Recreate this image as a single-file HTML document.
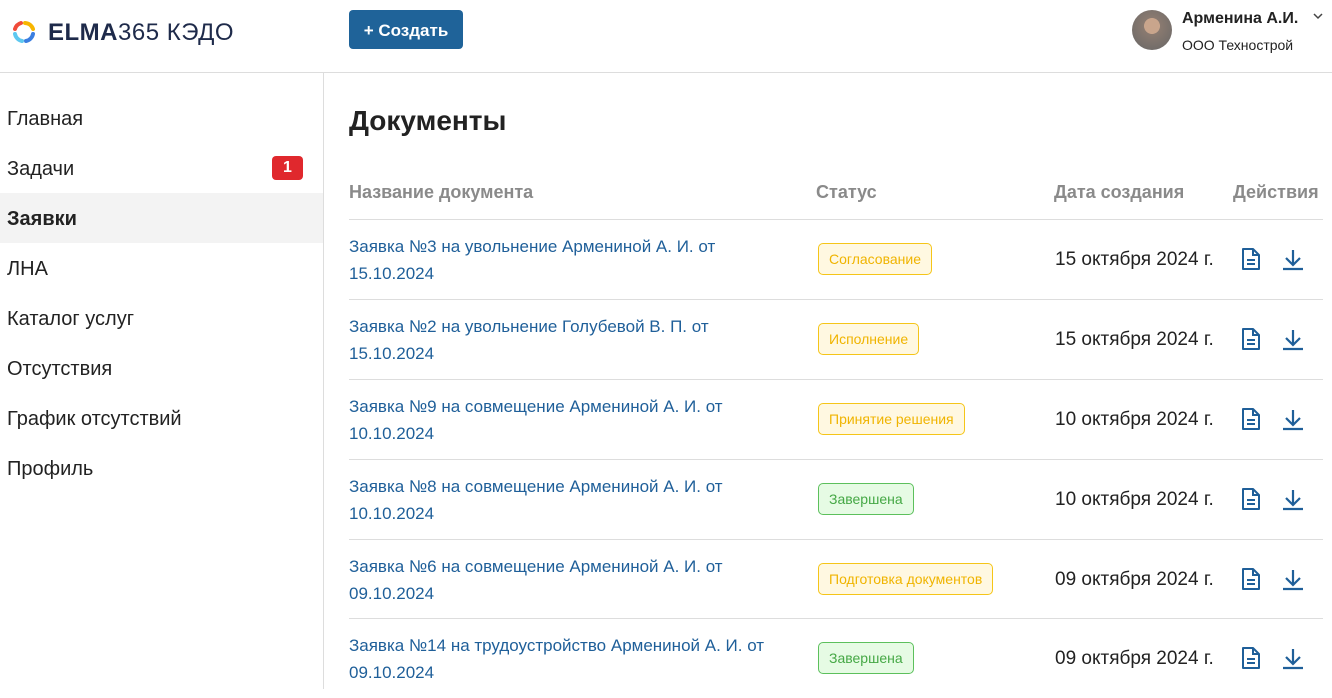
<!DOCTYPE html>
<html><head><meta charset="utf-8"><style>
*{box-sizing:border-box;margin:0;padding:0}
body{width:1332px;height:689px;overflow:hidden;background:#fff;font-family:"Liberation Sans","DejaVu Sans",sans-serif;color:#222;position:relative}
.hdr{position:absolute;left:0;top:0;width:1332px;height:73px;border-bottom:1px solid #ddd}
.side{position:absolute;left:0;top:73px;width:324px;height:616px;border-right:1px solid #ddd}
.side div{position:absolute;left:0;width:323px;height:50px;line-height:52px;padding-left:7px;font-size:20px;color:#222}
.side .act{background:#f3f3f3;font-weight:bold}
.red{position:absolute;left:272px;top:13px;width:31px;height:24px;background:#e0282d;color:#fff;border-radius:4px;font-size:16px;line-height:24px;text-align:center;font-weight:bold}
.btn{position:absolute;left:349px;top:10px;width:114px;height:39px;background:#1f6399;border-radius:4px;color:#fff;font-size:17px;font-weight:bold;line-height:41px;text-align:center}
h1{position:absolute;left:349px;top:105px;font-size:28px;font-weight:bold;color:#222}
.th{position:absolute;top:182px;font-size:18px;font-weight:bold;color:#8a8a8a}
.row{position:absolute;left:349px;width:974px;height:80px;border-top:1px solid #ddd}
.nm{position:absolute;left:0;top:13px;width:440px;font-size:17px;line-height:27px;color:#1f5f99}
.bd{position:absolute;left:469px;top:23px;height:32px;line-height:31px;padding:0 10px;font-size:14px;border-radius:5px}
.y{background:#fff8e1;border:1px solid #f5c518;color:#f0b400}
.g{background:#e6fbe4;border:1px solid #5cc05c;color:#45a845}
.dt{position:absolute;left:706px;top:29px;font-size:19px;color:#222}
.ic{position:absolute;top:27px}
</style></head><body>
<div class="hdr">
<svg style="position:absolute;left:12px;top:20px" width="24" height="24" viewBox="0 0 24 24"><path d="M3 9 A9 9 0 0 1 9 3" stroke="#f04b3a" stroke-width="4" fill="none" stroke-linecap="round"/><path d="M13 3 A9 9 0 0 1 21 9" stroke="#f7b500" stroke-width="4" fill="none" stroke-linecap="round"/><path d="M21 14 A9 9 0 0 1 14 21" stroke="#3b7ee0" stroke-width="4" fill="none" stroke-linecap="round"/><path d="M10 21 A9 9 0 0 1 3 14" stroke="#5ec8f0" stroke-width="4" fill="none" stroke-linecap="round"/></svg>
<div style="position:absolute;left:48px;top:19px;font-size:24px;color:#1e2a4a;letter-spacing:0.5px"><b>ELMA</b>365 КЭДО</div>
<div class="btn">+ Создать</div>
<div style="position:absolute;left:1132px;top:10px;width:40px;height:40px;border-radius:50%;background:radial-gradient(circle at 50% 40%,#c9a58c 0 25%,#8a7a70 26%,#666 100%)"></div>
<div style="position:absolute;left:1182px;top:10px;font-size:16px;font-weight:bold;color:#222">Арменина А.И.</div>
<svg style="position:absolute;left:1312px;top:12px" width="12" height="8" viewBox="0 0 12 8"><path d="M2 2l4 4 4-4" stroke="#444" stroke-width="1.5" fill="none"/></svg>
<div style="position:absolute;left:1182px;top:37px;font-size:14px;color:#222">ООО Технострой</div>
</div>
<div class="side">
<div style="top:20px">Главная</div>
<div style="top:70px">Задачи<span class="red">1</span></div>
<div class="act" style="top:120px">Заявки</div>
<div style="top:170px">ЛНА</div>
<div style="top:220px">Каталог услуг</div>
<div style="top:270px">Отсутствия</div>
<div style="top:320px">График отсутствий</div>
<div style="top:370px">Профиль</div>
</div>
<h1>Документы</h1>
<div class="th" style="left:349px">Название документа</div>
<div class="th" style="left:816px">Статус</div>
<div class="th" style="left:1054px">Дата создания</div>
<div class="th" style="left:1233px">Действия</div>

<div class="row" style="top:219px"><div class="nm">Заявка №3 на увольнение Армениной А. И. от 15.10.2024</div><div class="bd y">Согласование</div><div class="dt">15 октября 2024 г.</div>
<svg class="ic" style="left:891px" width="22" height="24" viewBox="0 0 22 24"><path d="M3 2h10l6 6v14H3z" fill="none" stroke="#1f5f99" stroke-width="2" stroke-linejoin="round"/><path d="M13 2v6h6M7 13h8M7 17h8" stroke="#1f5f99" stroke-width="2" fill="none"/></svg>
<svg class="ic" style="left:933px" width="22" height="24" viewBox="0 0 22 24"><path d="M11 3v14M4 11l7 7 7-7M1 22h20" stroke="#1f5f99" stroke-width="2.2" fill="none"/></svg></div>

<div class="row" style="top:299px"><div class="nm">Заявка №2 на увольнение Голубевой В. П. от 15.10.2024</div><div class="bd y">Исполнение</div><div class="dt">15 октября 2024 г.</div>
<svg class="ic" style="left:891px" width="22" height="24" viewBox="0 0 22 24"><path d="M3 2h10l6 6v14H3z" fill="none" stroke="#1f5f99" stroke-width="2" stroke-linejoin="round"/><path d="M13 2v6h6M7 13h8M7 17h8" stroke="#1f5f99" stroke-width="2" fill="none"/></svg>
<svg class="ic" style="left:933px" width="22" height="24" viewBox="0 0 22 24"><path d="M11 3v14M4 11l7 7 7-7M1 22h20" stroke="#1f5f99" stroke-width="2.2" fill="none"/></svg></div>

<div class="row" style="top:379px"><div class="nm">Заявка №9 на совмещение Армениной А. И. от 10.10.2024</div><div class="bd y">Принятие решения</div><div class="dt">10 октября 2024 г.</div>
<svg class="ic" style="left:891px" width="22" height="24" viewBox="0 0 22 24"><path d="M3 2h10l6 6v14H3z" fill="none" stroke="#1f5f99" stroke-width="2" stroke-linejoin="round"/><path d="M13 2v6h6M7 13h8M7 17h8" stroke="#1f5f99" stroke-width="2" fill="none"/></svg>
<svg class="ic" style="left:933px" width="22" height="24" viewBox="0 0 22 24"><path d="M11 3v14M4 11l7 7 7-7M1 22h20" stroke="#1f5f99" stroke-width="2.2" fill="none"/></svg></div>

<div class="row" style="top:459px"><div class="nm">Заявка №8 на совмещение Армениной А. И. от 10.10.2024</div><div class="bd g">Завершена</div><div class="dt">10 октября 2024 г.</div>
<svg class="ic" style="left:891px" width="22" height="24" viewBox="0 0 22 24"><path d="M3 2h10l6 6v14H3z" fill="none" stroke="#1f5f99" stroke-width="2" stroke-linejoin="round"/><path d="M13 2v6h6M7 13h8M7 17h8" stroke="#1f5f99" stroke-width="2" fill="none"/></svg>
<svg class="ic" style="left:933px" width="22" height="24" viewBox="0 0 22 24"><path d="M11 3v14M4 11l7 7 7-7M1 22h20" stroke="#1f5f99" stroke-width="2.2" fill="none"/></svg></div>

<div class="row" style="top:539px"><div class="nm">Заявка №6 на совмещение Армениной А. И. от 09.10.2024</div><div class="bd y">Подготовка документов</div><div class="dt">09 октября 2024 г.</div>
<svg class="ic" style="left:891px" width="22" height="24" viewBox="0 0 22 24"><path d="M3 2h10l6 6v14H3z" fill="none" stroke="#1f5f99" stroke-width="2" stroke-linejoin="round"/><path d="M13 2v6h6M7 13h8M7 17h8" stroke="#1f5f99" stroke-width="2" fill="none"/></svg>
<svg class="ic" style="left:933px" width="22" height="24" viewBox="0 0 22 24"><path d="M11 3v14M4 11l7 7 7-7M1 22h20" stroke="#1f5f99" stroke-width="2.2" fill="none"/></svg></div>

<div class="row" style="top:618px"><div class="nm">Заявка №14 на трудоустройство Армениной А. И. от 09.10.2024</div><div class="bd g">Завершена</div><div class="dt">09 октября 2024 г.</div>
<svg class="ic" style="left:891px" width="22" height="24" viewBox="0 0 22 24"><path d="M3 2h10l6 6v14H3z" fill="none" stroke="#1f5f99" stroke-width="2" stroke-linejoin="round"/><path d="M13 2v6h6M7 13h8M7 17h8" stroke="#1f5f99" stroke-width="2" fill="none"/></svg>
<svg class="ic" style="left:933px" width="22" height="24" viewBox="0 0 22 24"><path d="M11 3v14M4 11l7 7 7-7M1 22h20" stroke="#1f5f99" stroke-width="2.2" fill="none"/></svg></div>
</body></html>
